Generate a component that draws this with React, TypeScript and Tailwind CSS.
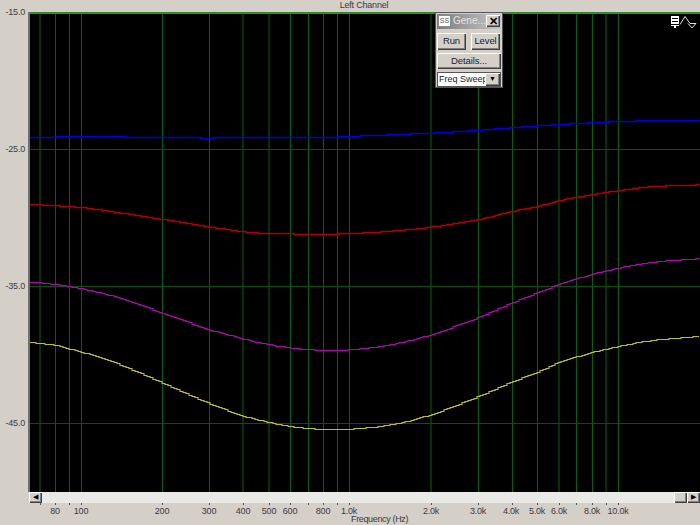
import React from "react";

type P = [number, number];
const gridThin = [55, 69, 81, 162, 209, 290, 308, 323, 337, 349, 478, 512, 537, 576, 592, 618];
const gridWide = [40, 243, 269, 431, 559, 606];
const hLines = [149, 286.5, 423];

const blue: P[] = [[30,136.7],[100,136.3],[200,137.5],[240,137.2],[330,136.7],[350,135.8],[430,132.7],[460,131],[500,128],[560,124],[620,121],[660,120],[700,120]];
const red: P[] = [[30,204],[80,207],[120,212.5],[162,219],[209,226.5],[250,232],[290,233.3],[310,234.3],[350,233],[390,230.7],[430,226.7],[478,219],[511,211],[537,206],[558,200.3],[592,194],[618,190.3],[650,186.3],[700,184.3]];
const magenta: P[] = [[30,281.5],[55,284],[81,288.3],[97,292],[117,297],[162,312.7],[209,329.3],[243,338.5],[250,340.7],[290,347.7],[310,349.3],[330,350.3],[350,349.3],[390,344.3],[430,334.3],[478,317],[511,302.7],[537,292.3],[558,284.3],[592,273.7],[618,267.7],[650,262],[700,258]];
const yellow: P[] = [[30,342],[55,345],[69,348.7],[81,351.7],[97,356.7],[117,363.3],[162,382.7],[209,403.3],[250,417.7],[290,426],[317,428.7],[350,428.7],[390,424.3],[430,414.3],[478,396],[511,381.7],[537,371.7],[558,362.3],[592,352],[618,346],[650,340.3],[700,335.7]];

function interp(pts: P[], x: number) {
  let i = 0;
  while (i < pts.length - 2 && pts[i + 1][0] < x) i++;
  const p1 = pts[i], p2 = pts[i + 1];
  const p0 = pts[Math.max(0, i - 1)], p3 = pts[Math.min(pts.length - 1, i + 2)];
  const t = (x - p1[0]) / (p2[0] - p1[0]);
  const h = p2[0] - p1[0];
  const m1 = ((p2[1] - p0[1]) / (p2[0] - p0[0])) * h;
  const m2 = ((p3[1] - p1[1]) / (p3[0] - p1[0])) * h;
  const t2 = t * t, t3 = t2 * t;
  return (2 * t3 - 3 * t2 + 1) * p1[1] + (t3 - 2 * t2 + t) * m1 + (-2 * t3 + 3 * t2) * p2[1] + (t3 - t2) * m2;
}

function stepped(pts: P[]) {
  let d = "";
  for (let x = 30; x <= 700; x += 3) {
    const y = Math.round(interp(pts, x)) + 0.5;
    d += x === 30 ? `M${x} ${y}` : `H${x}V${y}`;
  }
  return d;
}

const traces: [P[], string, number][] = [[blue, "#0000e0", 1.7], [red, "#b00000", 1.3], [magenta, "#b800b8", 1.15], [yellow, "#c4c400", 1.15]];

const xLabels: [number, string][] = [[55,"80"],[81,"100"],[162,"200"],[209,"300"],[243,"400"],[269,"500"],[290,"600"],[323,"800"],[349,"1.0k"],[431,"2.0k"],[478,"3.0k"],[511,"4.0k"],[537,"5.0k"],[559,"6.0k"],[592,"8.0k"],[618,"10.0k"]];
const yLabels: [number, string][] = [[0,"-15.0"],[137,"-25.0"],[274,"-35.0"],[411,"-45.0"]];

const bevel = "bg-[#d4d0c8] shadow-[inset_1px_1px_0_#ffffff,inset_-1px_-1px_0_#404040,inset_-2px_-2px_0_#808080]";
const btn = `${bevel} flex items-center justify-center text-[9.5px] tracking-[-0.1px] text-[#222]`;

function Chart() {
  return (
    <svg viewBox="30 12 670 480" width={670} height={480} className="block">
      {gridWide.map((x) => <rect key={x} x={x - 1} y={12} width={2} height={480} fill="#003400" />)}
      {gridThin.map((x) => <rect key={x} x={x} y={12} width={1} height={480} fill="#006400" />)}
      {hLines.map((y) => <rect key={y} x={30} y={Math.floor(y)} width={670} height={1} fill="#005800" />)}
      <rect x={28} y={12} width={672} height={2} fill="#2e8b2e" />
      {traces.map(([pts, c, w]) => <path key={c} d={stepped(pts)} fill="none" stroke={c} strokeWidth={w} />)}
      <g shapeRendering="crispEdges">
        <rect x={671} y={16} width={8} height={8} fill="#fff" />
        <rect x={672} y={18} width={6} height={1} fill="#000" />
        <rect x={672} y={21} width={6} height={1} fill="#000" />
        <rect x={671} y={24} width={8} height={1} fill="#000" />
        <rect x={671} y={25} width={8} height={1} fill="#fff" />
        <rect x={674} y={25} width={2} height={3} fill="#fff" />
      </g>
      <path d="M680 24.5L685 16.5L690 23.5H696L692 28L688 23.5" fill="none" stroke="#e0e0e0" strokeWidth={1} />
    </svg>
  );
}

function FloatWindow() {
  return (
    <div className="absolute left-[405px] top-0 w-[68px] h-[76px] bg-[#d4d0c8] border border-[#555] flex flex-col">
      <div className="h-[15px] m-[1px] mb-0 flex items-center justify-between bg-gradient-to-r from-[#7d7d7d] to-[#c8c8c8] px-[1px]">
        <div className="flex items-center gap-[2px]">
          <div className="w-[13px] h-[12px] bg-white border border-[#888] text-[7px] leading-[10px] text-center text-[#555]">SS</div>
          <span className="text-[10px] text-[#e4e4e4] leading-none">Gene...</span>
        </div>
        <div className={`${btn} w-[14px] h-[12px] !text-[11px] font-bold !text-black`}>✕</div>
      </div>
      <div className="flex gap-[5px] px-[1px] pt-[4px]">
        <div className={`${btn} w-[29px] h-[17px]`}>Run</div>
        <div className={`${btn} w-[29px] h-[17px]`}>Level</div>
      </div>
      <div className={`${btn} mx-[1px] mt-[3px] h-[17px]`}>Details...</div>
      <div className="mx-[1px] mt-[3px] h-[15px] flex border border-[#555] bg-white">
        <span className="w-[47px] overflow-hidden whitespace-nowrap text-[9px] leading-[13px] pl-[1px] text-[#222]">Freq Sweep</span>
        <div className={`${btn} flex-1 !text-[7px] !text-black`}>▼</div>
      </div>
    </div>
  );
}

export default function App() {
  return (
    <div className="w-[700px] h-[525px] overflow-hidden bg-[#d4d0c8] flex flex-col font-['Liberation_Sans',sans-serif] text-[#3a3a44]">
      <div className="h-[12px] shrink-0 text-center text-[9px] tracking-[-0.2px] leading-[11px] pl-[28px]">Left Channel</div>
      <div className="flex h-[480px] shrink-0">
        <div className="relative w-[28px] shrink-0">
          {yLabels.map(([y, t]) => (
            <span key={t} className="absolute right-[3px] text-[9px] leading-[10px] tracking-[-0.2px] -translate-y-1/2" style={{ top: y }}>{t}</span>
          ))}
        </div>
        <div className="relative flex-1 border-l-2 border-l-[#707070] bg-black overflow-hidden">
          <Chart />
          <FloatWindow />
        </div>
      </div>
      <div className="h-[11px] shrink-0 ml-[29px] flex bg-[#e9e9e5]">
        <div className={`${btn} w-[13px] !text-[7px] !text-black`}>◀</div>
        <div className="flex-1" />
        <div className={`${bevel} w-[13px]`} />
        <div className={`${btn} w-[13px] !text-[7px] !text-black`}>▶</div>
      </div>
      <div className="relative flex-1">
        {[...gridThin, ...gridWide].map((x) => (
          <div key={x} className="absolute top-0 w-[1px] h-[2px] bg-[#555]" style={{ left: x }} />
        ))}
        {xLabels.map(([x, t]) => (
          <span key={t} className="absolute top-[3px] -translate-x-1/2 text-[9px] leading-[10px] tracking-[-0.2px]" style={{ left: x }}>{t}</span>
        ))}
        <span className="absolute left-[351px] top-[11px] text-[9px] tracking-[-0.35px] leading-[10px]">Frequency (Hz)</span>
      </div>
    </div>
  );
}
